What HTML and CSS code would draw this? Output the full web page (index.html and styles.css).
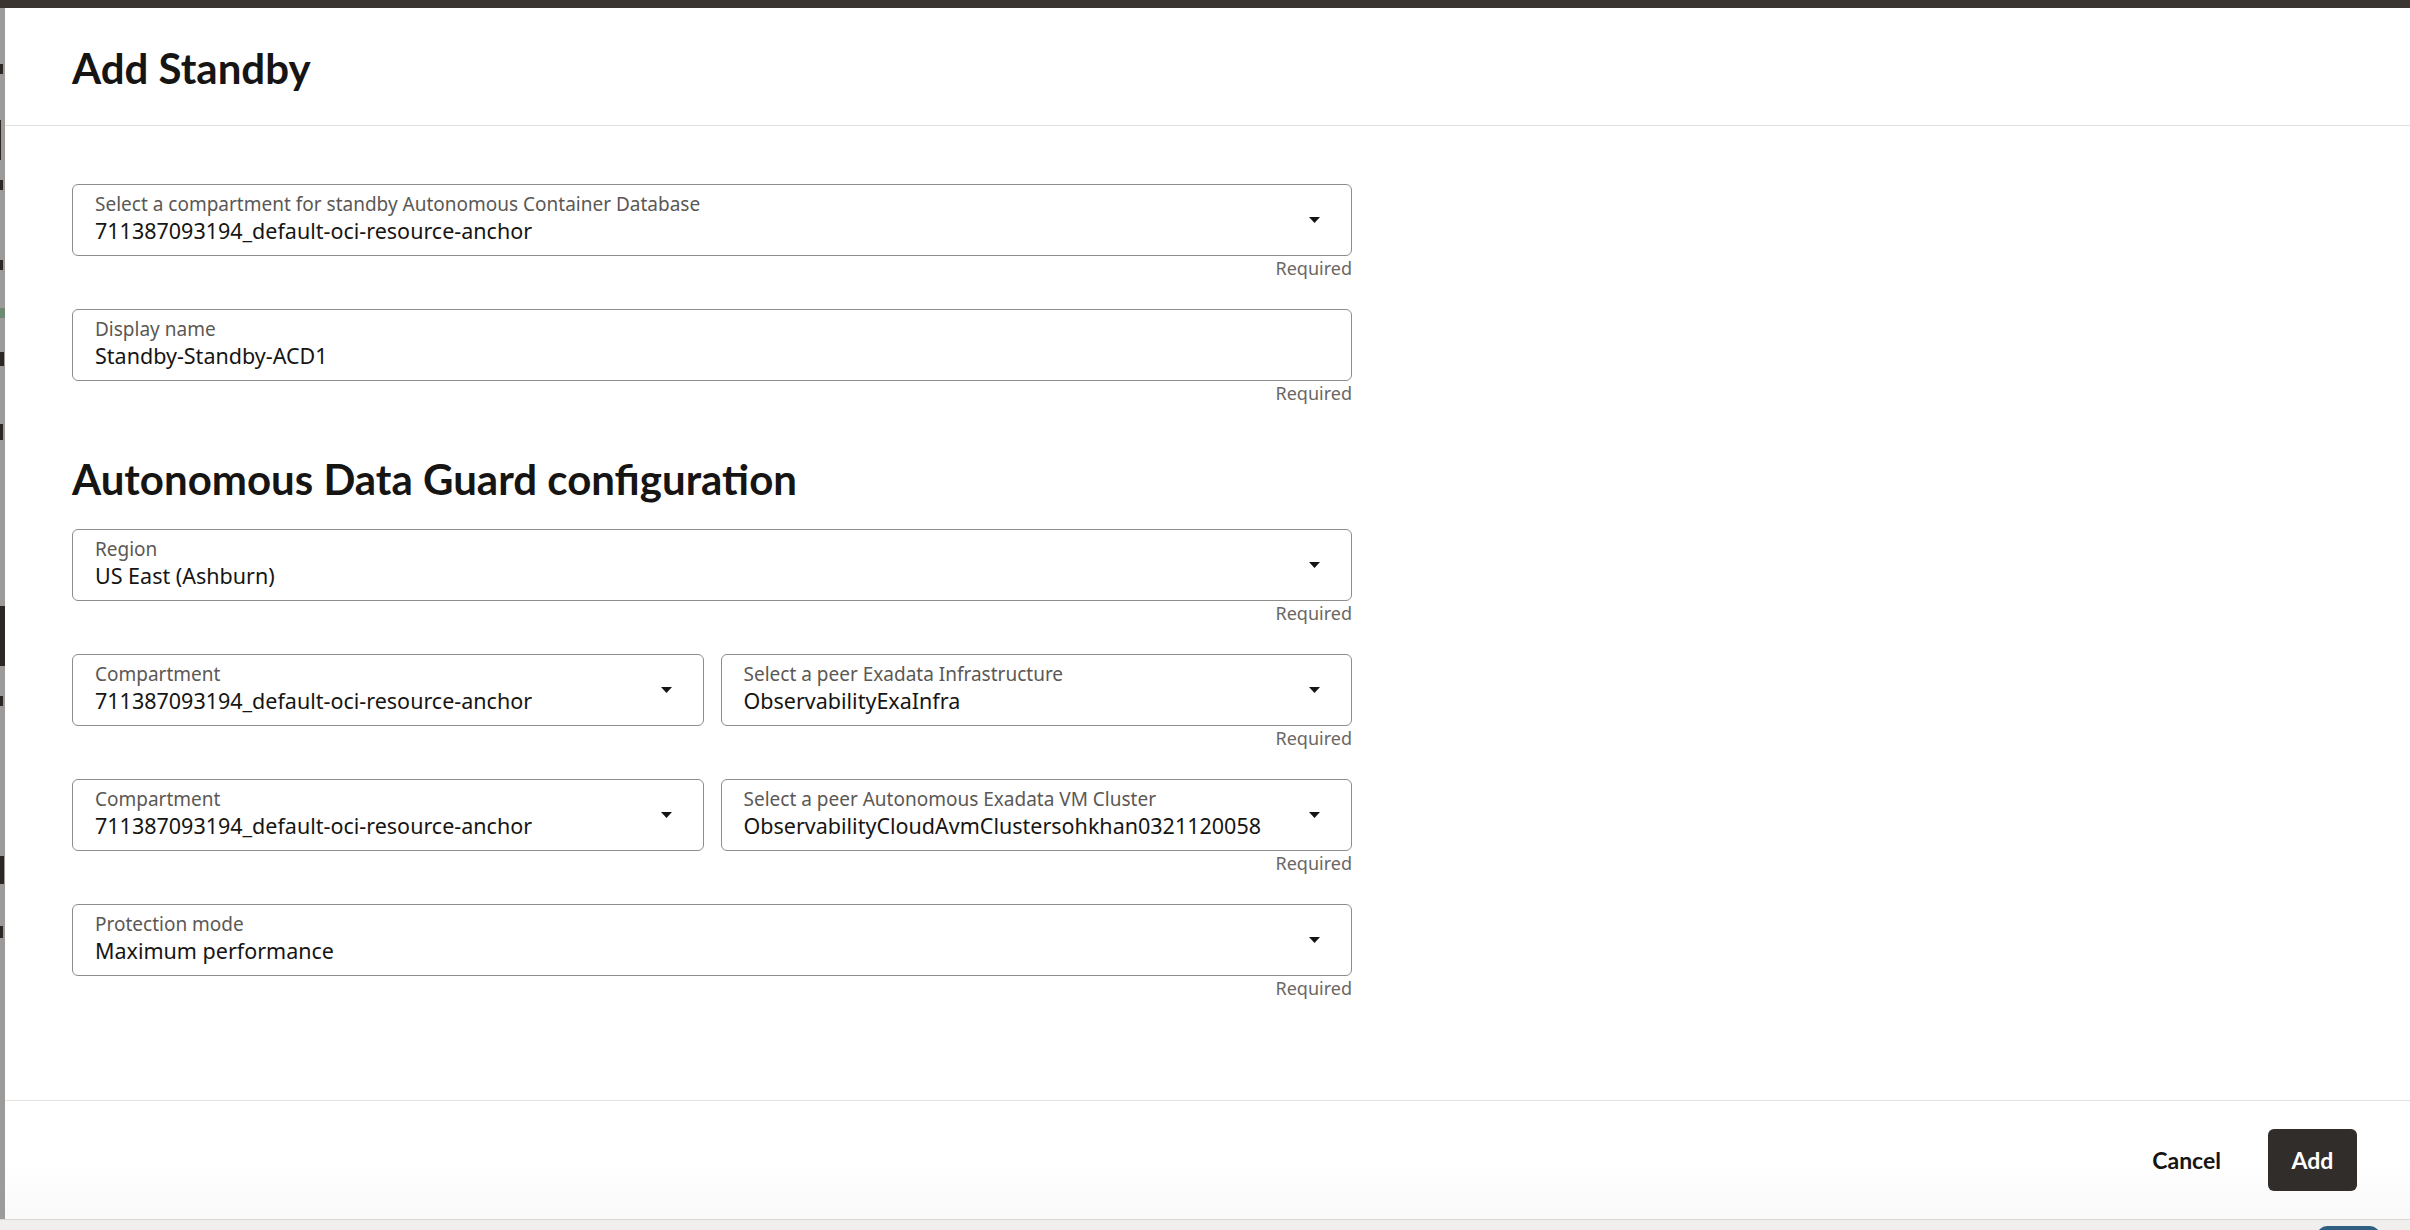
FILE: index.html
```html
<!DOCTYPE html>
<html lang="en">
<head>
<meta charset="utf-8">
<title>Add Standby</title>
<link rel="stylesheet" href="styles.css">
</head>
<body>
<div class="screen">
  <div class="topbar"></div>
  <div class="stage">
    <div class="bgstrip">
      <span class="mk mk-a"></span>
      <span class="mk mk-line"></span>
      <span class="mk mk-b"></span>
      <span class="mk mk-c"></span>
      <span class="mk mk-green"></span>
      <span class="mk mk-d"></span>
      <span class="mk mk-e"></span>
      <span class="mk mk-block"></span>
      <span class="mk mk-f"></span>
      <span class="mk mk-g"></span>
      <span class="mk mk-h"></span>
    </div>
    <div class="dialog">
      <header class="dlg-header">
        <h1 class="dlg-title">Add Standby</h1>
      </header>
      <main class="dlg-body">
        <div class="form">
          <div class="field">
            <div class="box">
              <div class="text">
                <span class="label">Select a compartment for standby Autonomous Container Database</span>
                <span class="value">711387093194_default-oci-resource-anchor</span>
              </div>
              <svg class="caret" width="11" height="6" viewBox="0 0 11 6"><path d="M0 0H11L5.5 6Z"/></svg>
            </div>
            <div class="helper">Required</div>
          </div>

          <div class="field">
            <div class="box">
              <div class="text">
                <span class="label">Display name</span>
                <span class="value">Standby-Standby-ACD1</span>
              </div>
            </div>
            <div class="helper">Required</div>
          </div>

          <h2 class="section-title">Autonomous Data Guard configuration</h2>

          <div class="field">
            <div class="box">
              <div class="text">
                <span class="label">Region</span>
                <span class="value">US East (Ashburn)</span>
              </div>
              <svg class="caret" width="11" height="6" viewBox="0 0 11 6"><path d="M0 0H11L5.5 6Z"/></svg>
            </div>
            <div class="helper">Required</div>
          </div>

          <div class="pair">
            <div class="field">
              <div class="box">
                <div class="text">
                  <span class="label">Compartment</span>
                  <span class="value">711387093194_default-oci-resource-anchor</span>
                </div>
                <svg class="caret" width="11" height="6" viewBox="0 0 11 6"><path d="M0 0H11L5.5 6Z"/></svg>
              </div>
            </div>
            <div class="field">
              <div class="box">
                <div class="text">
                  <span class="label">Select a peer Exadata Infrastructure</span>
                  <span class="value">ObservabilityExaInfra</span>
                </div>
                <svg class="caret" width="11" height="6" viewBox="0 0 11 6"><path d="M0 0H11L5.5 6Z"/></svg>
              </div>
              <div class="helper">Required</div>
            </div>
          </div>

          <div class="pair">
            <div class="field">
              <div class="box">
                <div class="text">
                  <span class="label">Compartment</span>
                  <span class="value">711387093194_default-oci-resource-anchor</span>
                </div>
                <svg class="caret" width="11" height="6" viewBox="0 0 11 6"><path d="M0 0H11L5.5 6Z"/></svg>
              </div>
            </div>
            <div class="field">
              <div class="box">
                <div class="text">
                  <span class="label">Select a peer Autonomous Exadata VM Cluster</span>
                  <span class="value">ObservabilityCloudAvmClustersohkhan0321120058</span>
                </div>
                <svg class="caret" width="11" height="6" viewBox="0 0 11 6"><path d="M0 0H11L5.5 6Z"/></svg>
              </div>
              <div class="helper">Required</div>
            </div>
          </div>

          <div class="field">
            <div class="box">
              <div class="text">
                <span class="label">Protection mode</span>
                <span class="value">Maximum performance</span>
              </div>
              <svg class="caret" width="11" height="6" viewBox="0 0 11 6"><path d="M0 0H11L5.5 6Z"/></svg>
            </div>
            <div class="helper">Required</div>
          </div>
        </div>
      </main>
      <footer class="dlg-footer">
        <button class="btn btn-text" type="button">Cancel</button>
        <button class="btn btn-primary" type="button">Add</button>
      </footer>
    </div>
  </div>
  <div class="bottombar"><span class="pill"></span></div>
</div>
</body>
</html>
```

FILE: styles.css
```css
html, body {
  margin: 0;
  padding: 0;
}
body {
  width: 2410px;
  height: 1230px;
  overflow: hidden;
  background: #ffffff;
  font-family: "Noto Sans", "Open Sans", sans-serif;
  color: #161513;
}
.screen {
  display: flex;
  flex-direction: column;
  height: 1230px;
}
.topbar {
  height: 8px;
  background: #3a3531;
  flex: none;
}
.stage {
  flex: 1;
  display: flex;
  min-height: 0;
}
.bgstrip {
  width: 5px;
  flex: none;
  background: #9c9b9a;
  display: flex;
  flex-direction: column;
  align-items: flex-start;
  overflow: hidden;
}
.mk {
  display: block;
  background: #2a2724;
  flex: none;
}
.mk-a { margin-top: 56px; width: 3px; height: 10px; }
.mk-line { margin-top: 46px; width: 1px; height: 40px; }
.mk-b { margin-top: 20px; width: 3px; height: 10px; }
.mk-c { margin-top: 70px; width: 3px; height: 10px; }
.mk-green { margin-top: 38px; width: 5px; height: 10px; background: #6f8a72; }
.mk-d { margin-top: 34px; width: 4px; height: 14px; }
.mk-e { margin-top: 58px; width: 3px; height: 16px; }
.mk-block { margin-top: 166px; width: 5px; height: 60px; background: #2b2724; }
.mk-f { margin-top: 30px; width: 3px; height: 10px; }
.mk-g { margin-top: 150px; width: 4px; height: 28px; }
.mk-h { margin-top: 42px; width: 3px; height: 12px; }

.dialog {
  flex: 1;
  display: flex;
  flex-direction: column;
  background: #ffffff;
  min-width: 0;
}
.dlg-header {
  height: 118px;
  flex: none;
  display: flex;
  align-items: center;
  padding: 2px 0 0 67px;
  box-sizing: border-box;
  border-bottom: 1px solid #e4e2e0;
}
.dlg-title {
  margin: 0;
  font-family: "Lato", "Noto Sans", sans-serif;
  font-weight: 700;
  font-size: 42px;
  line-height: 52px;
  color: #161513;
}
.dlg-body {
  flex: 1;
  padding: 58px 0 0 67px;
  min-height: 0;
}
.form {
  width: 1280px;
}
.field {
  margin-bottom: 29px;
}
.pair .field {
  margin-bottom: 0;
}
.pair {
  display: grid;
  grid-template-columns: 1fr 1fr;
  column-gap: 17px;
  margin-bottom: 29px;
}
.box {
  box-sizing: border-box;
  height: 72px;
  border: 1px solid #8f8c89;
  border-radius: 6px;
  padding: 13px 31px 0 22px;
  display: flex;
  align-items: flex-start;
}
.text {
  flex: 1;
  display: flex;
  flex-direction: column;
  min-width: 0;
}
.label {
  font-size: 19px;
  line-height: 13px;
  color: #5b5855;
  white-space: nowrap;
}
.value {
  margin-top: 10px;
  font-size: 21.5px;
  line-height: 20px;
  color: #161513;
  white-space: nowrap;
}
.caret {
  flex: none;
  align-self: center;
  margin-top: -13px;
  fill: #161513;
}
.helper {
  height: 24px;
  font-size: 18px;
  line-height: 24px;
  color: #6a6764;
  text-align: right;
}
.section-title {
  margin: 48px 0 24px;
  font-family: "Lato", "Noto Sans", sans-serif;
  font-weight: 700;
  font-size: 42px;
  line-height: 52px;
  color: #161513;
}
.dlg-footer {
  height: 118px;
  flex: none;
  border-top: 1px solid #e4e2e0;
  display: flex;
  justify-content: flex-end;
  align-items: center;
  gap: 24px;
  padding-right: 53px;
  background: linear-gradient(#ffffff 0%, #ffffff 50%, #f9f9f9 100%);
}
.btn {
  font-family: "Lato", "Noto Sans", sans-serif;
  font-weight: 700;
  font-size: 23px;
  height: 62px;
  padding: 0 23px;
  border: none;
  border-radius: 6px;
  cursor: pointer;
}
.btn-text {
  background: transparent;
  color: #161513;
}
.btn-primary {
  background: #312d2a;
  color: #ffffff;
  min-width: 89px;
}
.bottombar {
  height: 10px;
  flex: none;
  border-top: 1px solid #d9d7d5;
  background: #f0efed;
  display: flex;
  justify-content: flex-end;
  padding-right: 30px;
  overflow: hidden;
}
.pill {
  display: block;
  width: 63px;
  height: 20px;
  margin-top: 6px;
  border-radius: 10px;
  background: #2e5f80;
}
```
